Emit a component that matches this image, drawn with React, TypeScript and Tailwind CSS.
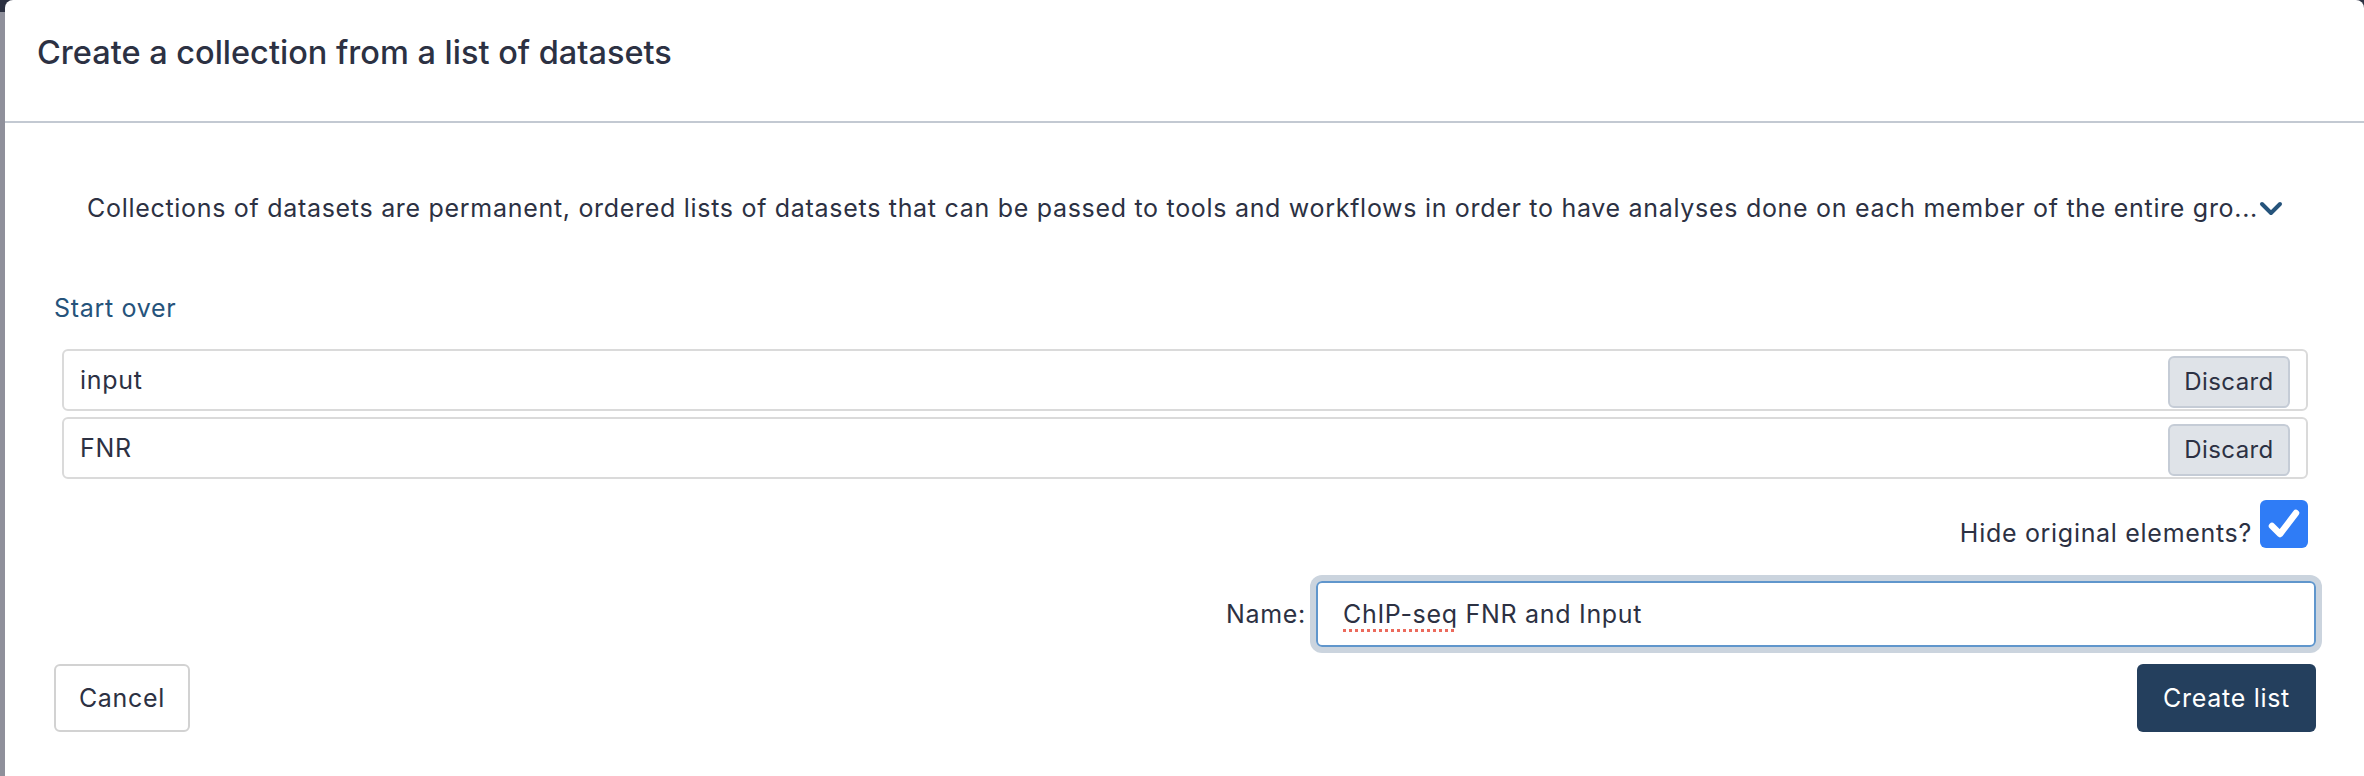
import React from "react";

const font = { fontFamily: "Inter, 'Noto Sans', sans-serif" };

function Chevron() {
  return (
    <svg width="24" height="16" viewBox="0 0 24 16" className="ml-[1px] mt-[2px] shrink-0">
      <polyline points="3,3 12,12 21,3" fill="none" stroke="#25537b" strokeWidth="4" strokeLinecap="round" strokeLinejoin="round" />
    </svg>
  );
}

function ListItem({ label }: { label: string }) {
  return (
    <div className="flex h-[62px] items-center justify-between rounded-[6px] border-2 border-[#dadada] pl-[16px] pr-[16px]">
      <span className="text-[25px] leading-[36px] tracking-[0.7px] text-[#2c3143]">{label}</span>
      <button className="mt-[4px] flex h-[52px] w-[122px] items-center justify-center rounded-[6px] border-2 border-[#c5ccd6] bg-[#dfe3e8] text-[24px] leading-none tracking-[0.4px] text-[#2c3143]">
        Discard
      </button>
    </div>
  );
}

export default function App() {
  return (
    <div
      style={font}
      className="flex h-[776px] w-[2364px] overflow-hidden bg-[linear-gradient(to_bottom,#2c3142_12px,#8f909b_12px)] pl-[5px]"
    >
      <div className="flex flex-1 flex-col rounded-t-[8px] bg-white text-[#2c3143]">
        {/* header */}
        <div className="h-[123px] border-b-2 border-[#c3c9d2] px-[32px] pt-[37px]">
          <h5 className="text-[32.5px] font-medium leading-none text-[#2c3143]">
            Create a collection from a list of datasets
          </h5>
        </div>

        {/* body */}
        <div className="flex flex-1 flex-col pl-[49px] pr-[48px] tracking-[0.7px]">
          <div className="mt-[67px] flex items-center justify-center">
            <span className="whitespace-nowrap text-[25px] leading-[36px]">
              Collections of datasets are permanent, ordered lists of datasets that can be passed to tools and workflows in order to have analyses done on each member of the entire gro...
            </span>
            <Chevron />
          </div>

          <div className="mt-[64px]">
            <a className="text-[25px] leading-[36px] text-[#25537b]">Start over</a>
          </div>

          <div className="mx-[8px] mt-[23px] flex flex-col gap-[6px]">
            <ListItem label="input" />
            <ListItem label="FNR" />
          </div>

          <div className="mr-[8px] mt-[21px] flex items-end justify-end gap-[8px]">
            <span className="mb-[-3px] text-[25px] leading-[36px]">Hide original elements?</span>
            <div className="flex h-[48px] w-[48px] items-center justify-center rounded-[6px] bg-[#2f7cf6]">
              <svg width="38" height="38" viewBox="0 0 38 38">
                <polyline points="7,21 15,29 31,8" fill="none" stroke="white" strokeWidth="6.5" strokeLinecap="round" strokeLinejoin="round" />
              </svg>
            </div>
          </div>

          <div className="mt-[33px] flex items-center justify-end gap-[10px]">
            <span className="text-[25px] leading-[36px]">Name:</span>
            <div className="flex h-[66px] w-[1000px] items-center rounded-[6px] border-2 border-[#6096cc] pl-[25px] shadow-[0_0_0_6px_#cbd4de]">
              <span className="text-[25px] leading-[36px] text-[#2c3143]">
                <span className="underline decoration-[#ec6a5c] decoration-dotted decoration-[3px] underline-offset-[6px]">ChIP-seq</span> FNR and Input
              </span>
            </div>
          </div>

          <div className="mt-[17px] flex items-center justify-between">
            <button className="flex h-[68px] w-[136px] items-center justify-center rounded-[6px] border-2 border-[#d2d2d2] bg-white text-[25px] leading-none text-[#2c3143]">
              Cancel
            </button>
            <button className="flex h-[68px] w-[179px] items-center justify-center rounded-[6px] bg-[#243f5d] text-[25px] leading-none text-white">
              Create list
            </button>
          </div>
        </div>
      </div>
    </div>
  );
}
